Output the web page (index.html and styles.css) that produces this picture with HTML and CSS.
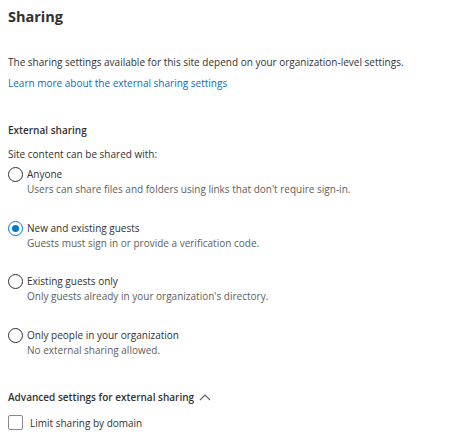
FILE: index.html
```html
<!DOCTYPE html>
<html>
<head>
<meta charset="utf-8">
<link rel="stylesheet" href="styles.css">
</head>
<body>
<div class="page">
  <h1 class="title">Sharing</h1>
  <p class="intro">The sharing settings available for this site depend on your organization-level settings.</p>
  <a class="link" href="#">Learn more about the external sharing settings</a>

  <h2 class="section">External sharing</h2>
  <p class="lead">Site content can be shared with:</p>

  <div class="options">
    <div class="option">
      <span class="radio"></span>
      <div class="otext">
        <div class="olabel">Anyone</div>
        <div class="odesc">Users can share files and folders using links that don't require sign-in.</div>
      </div>
    </div>
    <div class="option">
      <span class="radio checked"></span>
      <div class="otext">
        <div class="olabel">New and existing guests</div>
        <div class="odesc">Guests must sign in or provide a verification code.</div>
      </div>
    </div>
    <div class="option">
      <span class="radio"></span>
      <div class="otext">
        <div class="olabel">Existing guests only</div>
        <div class="odesc">Only guests already in your organization's directory.</div>
      </div>
    </div>
    <div class="option">
      <span class="radio"></span>
      <div class="otext">
        <div class="olabel">Only people in your organization</div>
        <div class="odesc">No external sharing allowed.</div>
      </div>
    </div>
  </div>

  <div class="advanced">
    <span>Advanced settings for external sharing</span>
    <svg class="chev" width="12" height="8" viewBox="0 0 12 8"><path d="M1 7 L6 2 L11 7" fill="none" stroke="#605e5c" stroke-width="1.1"/></svg>
  </div>
  <label class="check">
    <span class="box"></span>
    <span>Limit sharing by domain</span>
  </label>
</div>
</body>
</html>
```
FILE: styles.css
```css
html, body {
  margin: 0;
  padding: 0;
  background: #ffffff;
}
body {
  font-family: "Open Sans", "Noto Sans", sans-serif;
  color: #323130;
  font-size: 10px;
}
.page {
  padding: 0 8px;
}
.title {
  font-size: 14.5px;
  font-weight: 700;
  margin: 0;
  padding-top: 5px;
  line-height: 24px;
}
.intro {
  margin: 25px 0 0;
  line-height: 16px;
}
.link {
  display: block;
  color: #0f6cbd;
  text-decoration: none;
  margin-top: 5px;
  line-height: 16px;
}
.section {
  font-size: 10px;
  font-weight: 600;
  margin: 31px 0 0;
  line-height: 16px;
}
.lead {
  margin: 8px 0 0;
  line-height: 16px;
}
.options {
  display: flex;
  flex-direction: column;
  gap: 23.5px;
  margin-top: 5px;
}
.option {
  display: flex;
  gap: 4px;
  align-items: flex-start;
}
.radio {
  flex: none;
  width: 13px;
  height: 13px;
  border: 1px solid #323130;
  border-radius: 50%;
  position: relative;
}
.radio.checked {
  border-color: #0078d4;
}
.radio.checked::after {
  content: "";
  position: absolute;
  left: 3px;
  top: 3px;
  width: 7px;
  height: 7px;
  border-radius: 50%;
  background: #0078d4;
}
.olabel {
  line-height: 15px;
}
.odesc {
  color: #605e5c;
  line-height: 15px;
}
.advanced {
  margin-top: 31.5px;
  font-weight: 600;
  display: flex;
  align-items: center;
  gap: 5px;
  line-height: 16px;
}
.check {
  display: flex;
  align-items: center;
  gap: 7px;
  margin-top: 10px;
}
.box {
  width: 13px;
  height: 13px;
  border: 1px solid #8a8886;
  border-radius: 2px;
}
```
